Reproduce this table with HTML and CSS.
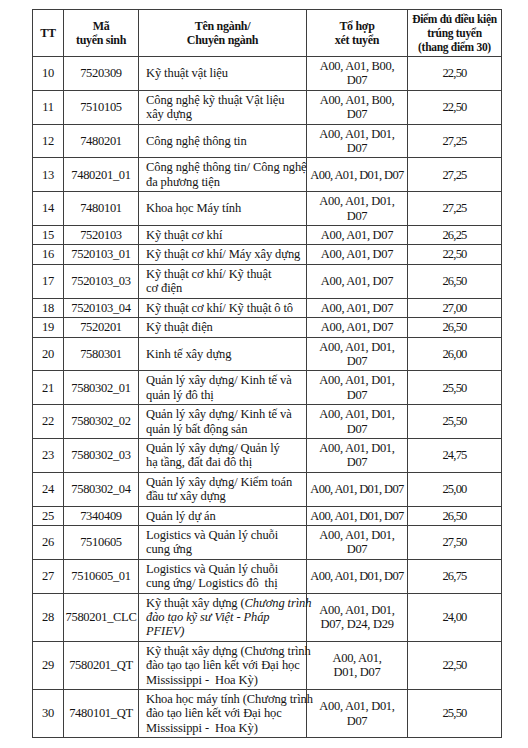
FILE: index.html
```html
<!DOCTYPE html>
<html lang="vi">
<head>
<meta charset="utf-8">
<title>Điểm đủ điều kiện trúng tuyển</title>
<link rel="stylesheet" href="styles.css">
</head>
<body>
<table class="scores">
  <colgroup>
    <col class="c-tt"><col class="c-ma"><col class="c-ten"><col class="c-to"><col class="c-diem">
  </colgroup>
  <thead>
    <tr class="head">
      <th>TT</th>
      <th>Mã<br>tuyển sinh</th>
      <th>Tên ngành/<br>Chuyên ngành</th>
      <th>Tổ hợp<br>xét tuyển</th>
      <th class="narrow">Điểm đủ điều kiện<br>trúng tuyển<br>(thang điểm 30)</th>
    </tr>
  </thead>
  <tbody>
    <tr><td>10</td><td>7520309</td><td class="name">Kỹ thuật vật liệu</td><td>A00, A01, B00,<br>D07</td><td>22,50</td></tr>
    <tr><td>11</td><td>7510105</td><td class="name">Công nghệ kỹ thuật Vật liệu<br>xây dựng</td><td>A00, A01, B00,<br>D07</td><td>22,50</td></tr>
    <tr><td>12</td><td>7480201</td><td class="name">Công nghệ thông tin</td><td>A00, A01, D01,<br>D07</td><td>27,25</td></tr>
    <tr><td>13</td><td>7480201_01</td><td class="name">Công nghệ thông tin/ Công nghệ<br>đa phương tiện</td><td class="tight">A00, A01, D01, D07</td><td>27,25</td></tr>
    <tr><td>14</td><td>7480101</td><td class="name">Khoa học Máy tính</td><td>A00, A01, D01,<br>D07</td><td>27,25</td></tr>
    <tr><td>15</td><td>7520103</td><td class="name">Kỹ thuật cơ khí</td><td>A00, A01, D07</td><td>26,25</td></tr>
    <tr><td>16</td><td>7520103_01</td><td class="name">Kỹ thuật cơ khí/ Máy xây dựng</td><td>A00, A01, D07</td><td>22,50</td></tr>
    <tr><td>17</td><td>7520103_03</td><td class="name">Kỹ thuật cơ khí/ Kỹ thuật<br>cơ điện</td><td>A00, A01, D07</td><td>26,50</td></tr>
    <tr><td>18</td><td>7520103_04</td><td class="name">Kỹ thuật cơ khí/ Kỹ thuật ô tô</td><td>A00, A01, D07</td><td>27,00</td></tr>
    <tr><td>19</td><td>7520201</td><td class="name">Kỹ thuật điện</td><td>A00, A01, D07</td><td>26,50</td></tr>
    <tr><td>20</td><td>7580301</td><td class="name">Kinh tế xây dựng</td><td>A00, A01, D01,<br>D07</td><td>26,00</td></tr>
    <tr><td>21</td><td>7580302_01</td><td class="name">Quản lý xây dựng/ Kinh tế và<br>quản lý đô thị</td><td>A00, A01, D01,<br>D07</td><td>25,50</td></tr>
    <tr><td>22</td><td>7580302_02</td><td class="name">Quản lý xây dựng/ Kinh tế và<br>quản lý bất động sản</td><td>A00, A01, D01,<br>D07</td><td>25,50</td></tr>
    <tr><td>23</td><td>7580302_03</td><td class="name">Quản lý xây dựng/ Quản lý<br>hạ tầng, đất đai đô thị</td><td>A00, A01, D01,<br>D07</td><td>24,75</td></tr>
    <tr><td>24</td><td>7580302_04</td><td class="name">Quản lý xây dựng/ Kiểm toán<br>đầu tư xây dựng</td><td class="tight">A00, A01, D01, D07</td><td>25,00</td></tr>
    <tr><td>25</td><td>7340409</td><td class="name">Quản lý dự án</td><td class="tight">A00, A01, D01, D07</td><td>26,50</td></tr>
    <tr><td>26</td><td>7510605</td><td class="name">Logistics và Quản lý chuỗi<br>cung ứng</td><td>A00, A01, D01,<br>D07</td><td>27,50</td></tr>
    <tr><td>27</td><td>7510605_01</td><td class="name">Logistics và Quản lý chuỗi<br>cung ứng/ Logistics đô&nbsp; thị</td><td class="tight">A00, A01, D01, D07</td><td>26,75</td></tr>
    <tr><td>28</td><td>7580201_CLC</td><td class="name">Kỹ thuật xây dựng (<i>Chương trình<br>đào tạo kỹ sư Việt - Pháp<br>PFIEV)</i></td><td>A00, A01, D01,<br>D07, D24, D29</td><td>24,00</td></tr>
    <tr><td>29</td><td>7580201_QT</td><td class="name">Kỹ thuật xây dựng (Chương trình<br>đào tạo tạo liên kết với Đại học<br>Mississippi -&nbsp; Hoa Kỳ)</td><td>A00, A01,<br>D01, D07</td><td>22,50</td></tr>
    <tr><td>30</td><td>7480101_QT</td><td class="name">Khoa học máy tính (Chương trình<br>đào tạo liên kết với Đại học<br>Mississippi -&nbsp; Hoa Kỳ)</td><td>A00, A01, D01,<br>D07</td><td>25,50</td></tr>
  </tbody>
</table>
</body>
</html>
```

FILE: styles.css
```css
html, body {
  margin: 0;
  padding: 0;
  background: #ffffff;
}

body {
  padding: 9px 0 0 32px;
  font-family: "Liberation Serif", Tinos, "Times New Roman", serif;
  color: #141414;
}

.scores {
  border-collapse: collapse;
  table-layout: fixed;
  width: 469px;
  font-family: "Liberation Serif", Tinos, "Times New Roman", serif;
  font-size: 12.5px;
  line-height: 14.4px;
}

.c-tt { width: 31px; }
.c-ma { width: 75px; }
.c-ten { width: 168px; }
.c-to { width: 101px; }
.c-diem { width: 94px; }

.scores th,
.scores td {
  border: 1px solid #3e3e3e;
  padding: 2px 1px;
  text-align: center;
  vertical-align: middle;
  white-space: nowrap;
  overflow: visible;
  letter-spacing: -0.3px;
}

.scores th {
  font-weight: bold;
  font-size: 12px;
  line-height: 14px;
  height: 40px;
}

.scores th.narrow {
  font-size: 11.5px;
  letter-spacing: -0.3px;
}

.scores td.name {
  text-align: left;
  padding-left: 7px;
  letter-spacing: -0.1px;
}

.scores td.tight {
  letter-spacing: -0.6px;
}

.scores td:nth-child(5) {
  letter-spacing: -0.8px;
}
```
